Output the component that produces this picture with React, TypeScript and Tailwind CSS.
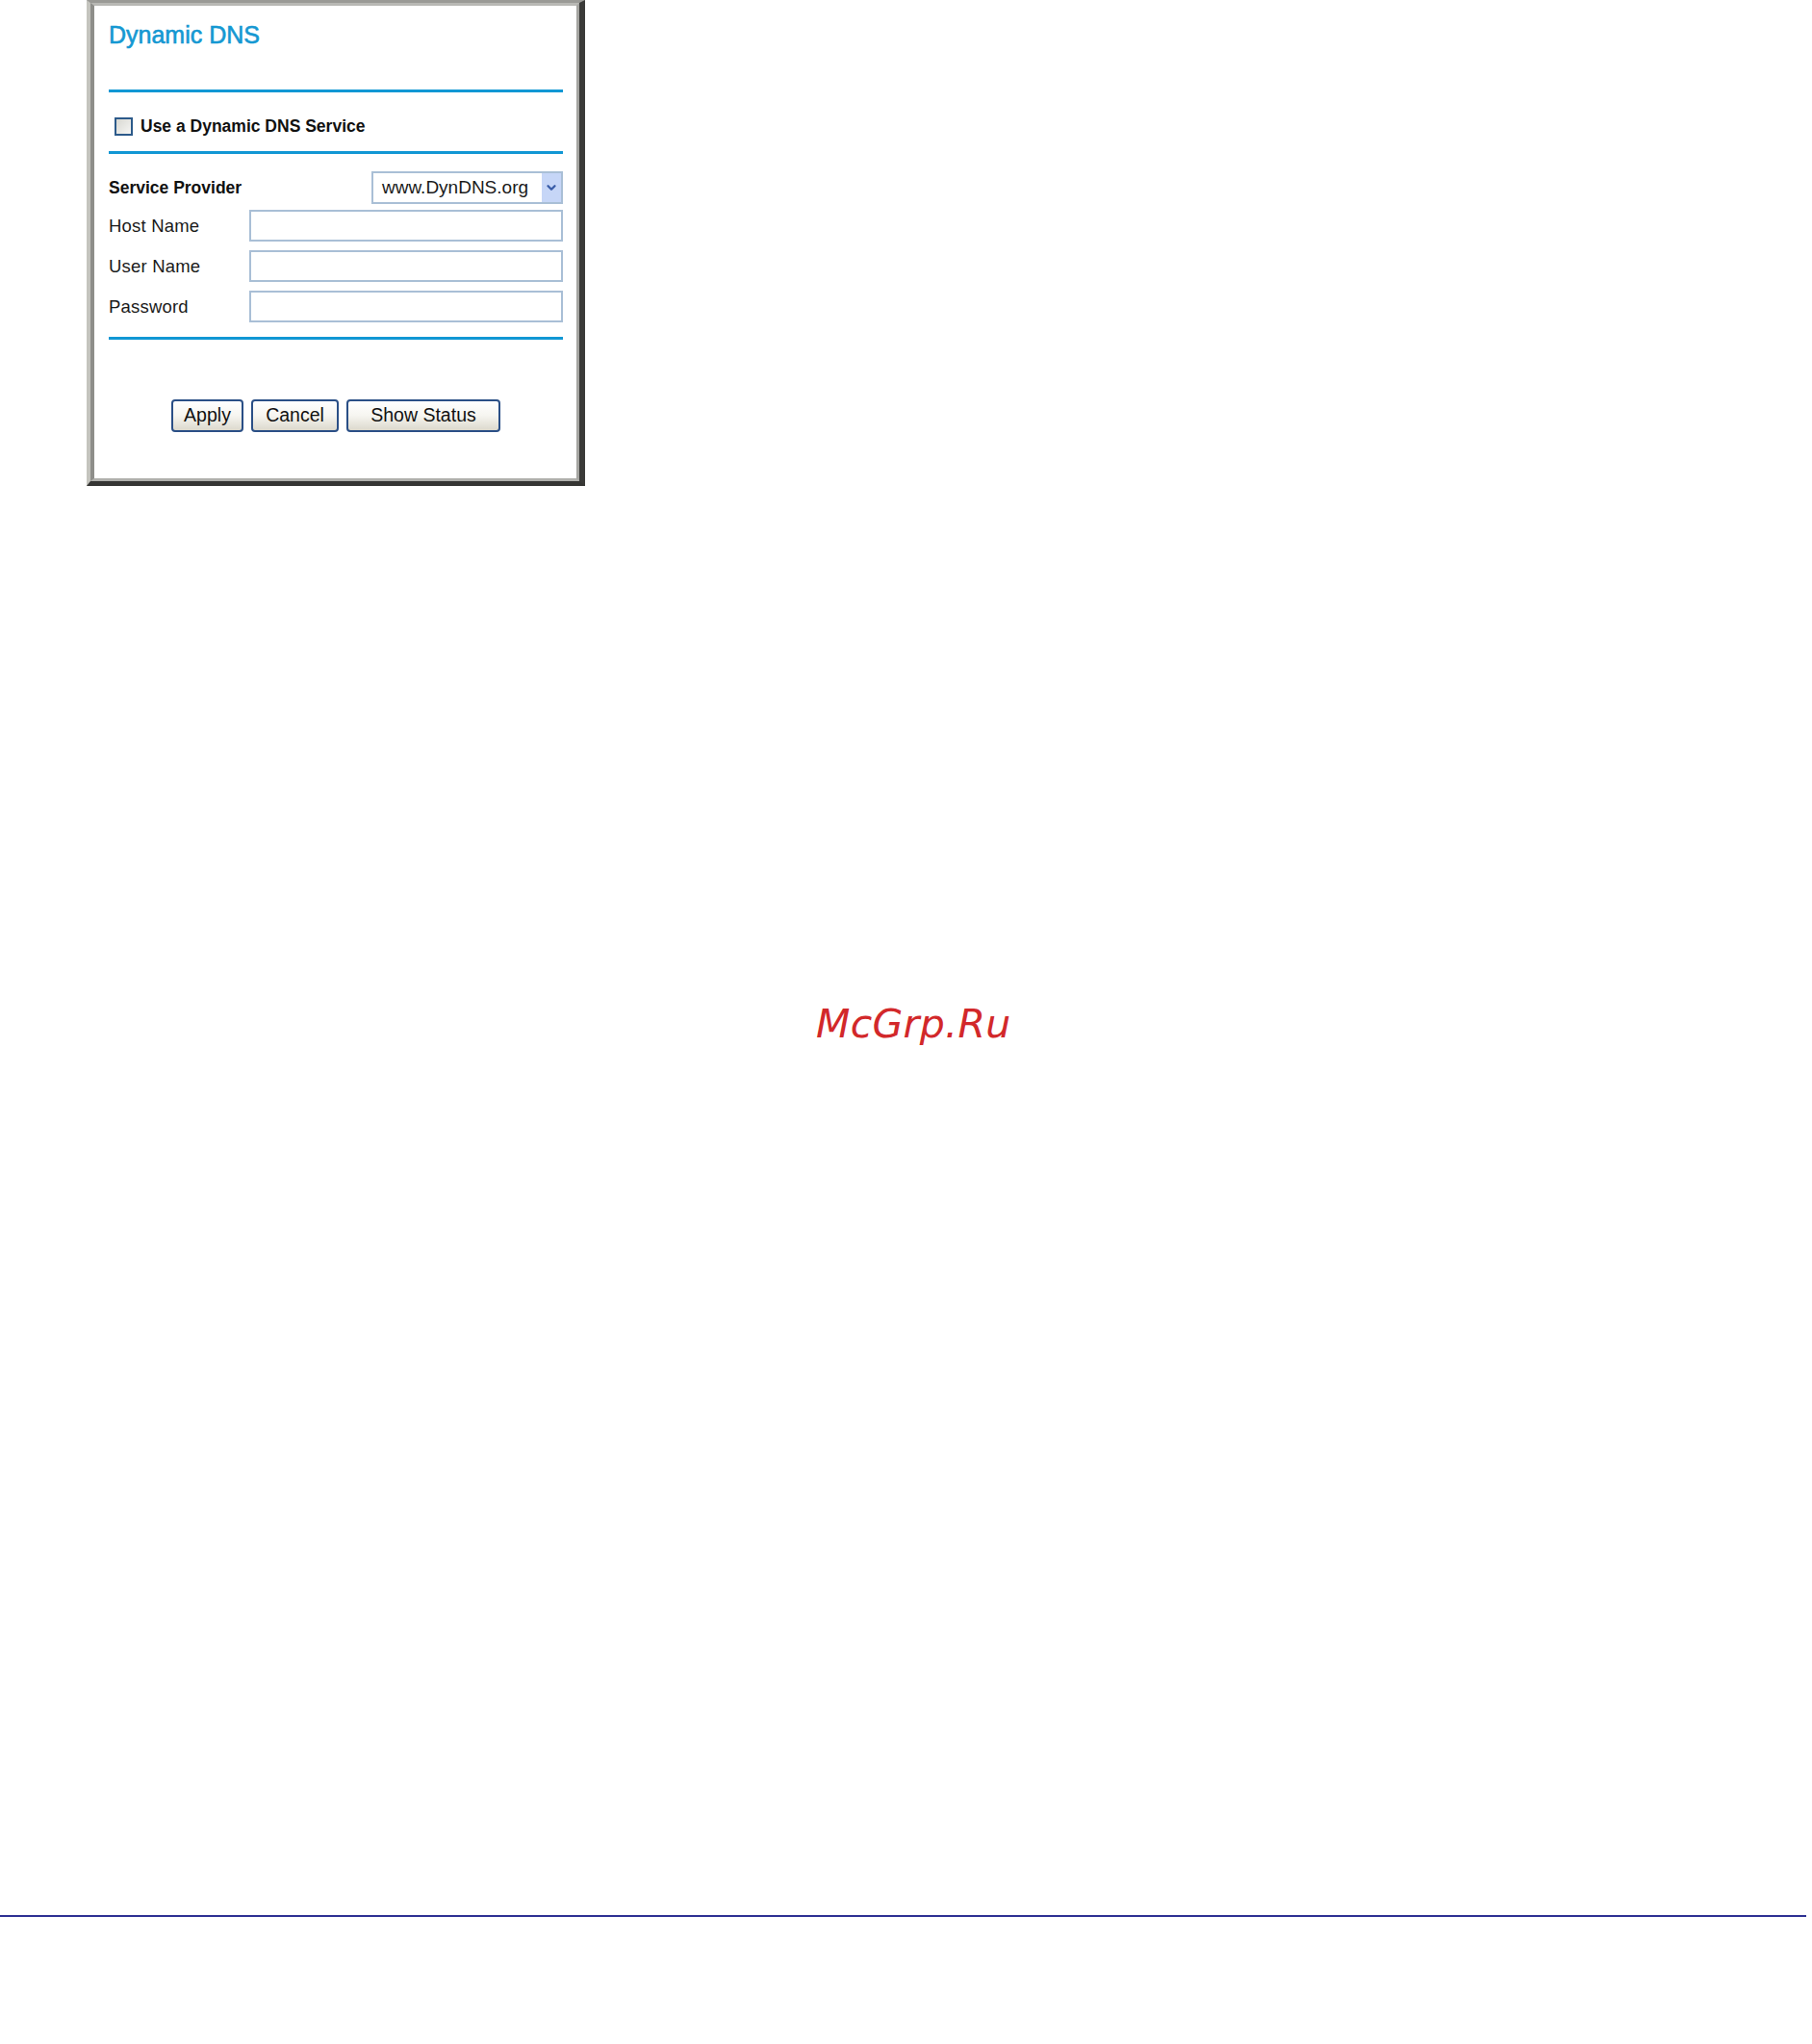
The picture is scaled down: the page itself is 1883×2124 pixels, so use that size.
import React from 'react';
import { ChevronDown } from 'lucide-react';

const sans = { fontFamily: '"Liberation Sans", Arial, sans-serif' };

function Rule() {
  return <div className="h-[3px] w-full bg-[#1197d4]" />;
}

function XpButton({ label, width }: { label: string; width: string }) {
  return (
    <button
      type="button"
      className={`${width} h-[34px] rounded-[4px] border-2 border-[#2a4f86] bg-gradient-to-b from-white via-[#f6f5f0] to-[#dcd9cd] text-[19.5px] leading-none text-[#111]`}
      style={sans}
    >
      {label}
    </button>
  );
}

function FieldRow({ label, className }: { label: string; className?: string }) {
  return (
    <div className={`flex h-[33px] items-center ${className ?? ''}`}>
      <span className="w-[146px] shrink-0 text-[18.5px] tracking-[0.2px] text-[#1a1a1a]">{label}</span>
      <input
        type="text"
        className="h-full flex-1 border-2 border-[#a9bfd6] bg-white outline-none"
      />
    </div>
  );
}

function DynamicDnsPanel() {
  return (
    <div className="ml-[90px] w-[518px] border-t-[3px] border-l-[4px] border-r-[6px] border-b-[5px] border-t-[#9a9a96] border-l-[#c4c4be] border-r-[#3a3a38] border-b-[#353533]">
      <div
        className="h-[497px] border-t-[3px] border-l-[4px] border-r-[3px] border-b-[3px] border-t-[#b8b8b4] border-l-[#8e8e8a] border-r-[#a4a4a0] border-b-[#b0b0ac] bg-white pl-[15px] pr-[14px] pt-[16px]"
        style={sans}
      >
        <h2 className="text-[25px] leading-[28px] text-[#1598d2] [-webkit-text-stroke:0.6px_#1598d2]">Dynamic DNS</h2>

        <div className="mt-[43px]">
          <Rule />
        </div>

        <label className="flex items-center gap-[8px] pl-[6px] pt-[26px] pb-[16px]">
          <span className="h-[19px] w-[19px] border-2 border-[#2c5a8a] bg-gradient-to-br from-[#d8d8d2] to-[#f6f6f4]" />
          <span className="text-[17.5px] font-bold leading-[19px] text-[#111]">Use a Dynamic DNS Service</span>
        </label>

        <Rule />

        <div className="mt-[18px] flex h-[34px] items-center justify-between">
          <span className="text-[17.5px] font-bold text-[#111]">Service Provider</span>
          <div className="flex h-full w-[199px] items-stretch border-2 border-[#a9bfd6] bg-white">
            <span className="flex-1 pl-[9px] text-[19px] leading-[30px] text-[#1a1a1a]">www.DynDNS.org</span>
            <span className="flex w-[20px] items-center justify-center bg-[#c6d6f7]">
              <ChevronDown size={14} strokeWidth={4} className="text-[#3a5da8]" />
            </span>
          </div>
        </div>

        <FieldRow label="Host Name" className="mt-[6px]" />
        <FieldRow label="User Name" className="mt-[9px]" />
        <FieldRow label="Password" className="mt-[9px]" />

        <div className="mt-[15px]">
          <Rule />
        </div>

        <div className="mt-[62px] flex justify-center gap-[8px]">
          <XpButton label="Apply" width="w-[75px]" />
          <XpButton label="Cancel" width="w-[91px]" />
          <XpButton label="Show Status" width="w-[160px]" />
        </div>
      </div>
    </div>
  );
}

export default function App() {
  return (
    <div className="flex h-[2124px] w-full flex-col bg-white">
      <DynamicDnsPanel />

      <div
        className="ml-[848px] mt-[539px] text-[41px] italic leading-[41px] tracking-[0.3px] text-[#d2282a]"
        style={{ fontFamily: '"DejaVu Sans", sans-serif' }}
      >
        McGrp.Ru
      </div>

      <div className="mt-[905px] h-[2px] w-[1877px] bg-[#2e3192]" />
    </div>
  );
}
